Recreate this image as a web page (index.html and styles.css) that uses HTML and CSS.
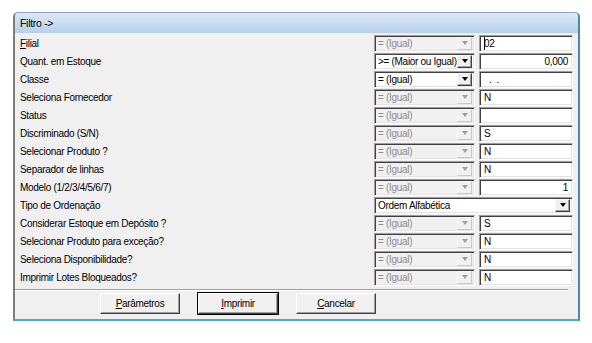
FILE: index.html
```html
<!DOCTYPE html>
<html lang="pt-BR">
<head>
    <meta charset="UTF-8">
    <title>Filtro</title>
    <link rel="stylesheet" href="styles.css">
</head>
<body>
    <div class="window">
        <div class="titlebar">Filtro -&gt;</div>
        <div class="rows">
            <div class="row">
                <span class="label"><u>F</u>ilial</span>
                <div class="combo disabled"><span class="value">= (Igual)</span><span class="drop"></span></div>
                <div class="field"><span class="caret"></span>02</div>
            </div>
            <div class="row">
                <span class="label">Quant. em Estoque</span>
                <div class="combo"><span class="value">&gt;= (Maior ou Igual)</span><span class="drop"></span></div>
                <div class="field right">0,000</div>
            </div>
            <div class="row">
                <span class="label">Classe</span>
                <div class="combo"><span class="value">= (Igual)</span><span class="drop"></span></div>
                <div class="field dots">.&nbsp;&nbsp;.</div>
            </div>
            <div class="row">
                <span class="label">Seleciona Fornecedor</span>
                <div class="combo disabled"><span class="value">= (Igual)</span><span class="drop"></span></div>
                <div class="field">N</div>
            </div>
            <div class="row">
                <span class="label">Status</span>
                <div class="combo disabled"><span class="value">= (Igual)</span><span class="drop"></span></div>
                <div class="field"></div>
            </div>
            <div class="row">
                <span class="label">Discriminado (S/N)</span>
                <div class="combo disabled"><span class="value">= (Igual)</span><span class="drop"></span></div>
                <div class="field">S</div>
            </div>
            <div class="row">
                <span class="label">Selecionar Produto ?</span>
                <div class="combo disabled"><span class="value">= (Igual)</span><span class="drop"></span></div>
                <div class="field">N</div>
            </div>
            <div class="row">
                <span class="label">Separador de linhas</span>
                <div class="combo disabled"><span class="value">= (Igual)</span><span class="drop"></span></div>
                <div class="field">N</div>
            </div>
            <div class="row">
                <span class="label">Modelo (1/2/3/4/5/6/7)</span>
                <div class="combo disabled"><span class="value">= (Igual)</span><span class="drop"></span></div>
                <div class="field right">1</div>
            </div>
            <div class="row">
                <span class="label">Tipo de Ordenação</span>
                <div class="combo wide"><span class="value">Ordem Alfabética</span><span class="drop"></span></div>
            </div>
            <div class="row">
                <span class="label">Considerar Estoque em Depósito ?</span>
                <div class="combo disabled"><span class="value">= (Igual)</span><span class="drop"></span></div>
                <div class="field">S</div>
            </div>
            <div class="row">
                <span class="label">Selecionar Produto para exceção?</span>
                <div class="combo disabled"><span class="value">= (Igual)</span><span class="drop"></span></div>
                <div class="field">N</div>
            </div>
            <div class="row">
                <span class="label">Seleciona Disponibilidade?</span>
                <div class="combo disabled"><span class="value">= (Igual)</span><span class="drop"></span></div>
                <div class="field">N</div>
            </div>
            <div class="row">
                <span class="label">Imprimir Lotes Bloqueados?</span>
                <div class="combo disabled"><span class="value">= (Igual)</span><span class="drop"></span></div>
                <div class="field">N</div>
            </div>
        </div>
        <div class="separator"></div>
        <div class="buttons">
            <button class="btn"><u>P</u>arâmetros</button>
            <button class="btn default"><u>I</u>mprimir</button>
            <button class="btn"><u>C</u>ancelar</button>
        </div>
    </div>
</body>
</html>
```

FILE: styles.css
```css
body {
    margin: 0;
    background: #ffffff;
    font-family: Tahoma, "Liberation Sans", sans-serif;
    font-size: 10px;
    letter-spacing: -0.3px;
    color: #000;
}
.window {
    margin: 12px 0 0 13px;
    width: 563px;
    height: 306px;
    border-left: 2px solid #7d7d7d;
    border-right: 2px solid #4a8aa8;
    border-bottom: 2px solid #3fb0d6;
    border-top: 1px solid #8fa3b8;
    border-radius: 5px 5px 0 0;
    background: #f0f0f0;
    display: flex;
    flex-direction: column;
}
.titlebar {
    height: 20px;
    line-height: 20px;
    padding-left: 5px;
    font-size: 10.5px;
    background: linear-gradient(#dbe8f6, #b9d0ea);
    border-radius: 4px 4px 0 0;
}
.rows {
    padding: 1px 5px 0 5px;
}
.row {
    display: grid;
    grid-template-columns: 350px 101px 94px;
    column-gap: 4px;
    height: 18px;
    align-items: center;
}
.combo {
    height: 17px;
    box-sizing: border-box;
    border-top: 1px solid #a0a0a0;
    border-left: 1px solid #a0a0a0;
    border-right: 1px solid #ffffff;
    border-bottom: 1px solid #ffffff;
    box-shadow: inset 1px 1px #404040, inset -1px -1px #e3e3e3;
    background: #ffffff;
    display: flex;
    align-items: center;
    padding: 0 2px 0 3px;
}
.combo .value {
    flex: 1;
    white-space: nowrap;
    overflow: hidden;
}
.combo.wide {
    grid-column: 2 / 4;
}
.combo.disabled {
    background: #f0f0f0;
    color: #8d8d8d;
}
.drop {
    width: 15px;
    height: 13px;
    box-sizing: border-box;
    background: #f0f0f0;
    border-top: 1px solid #f8f8f8;
    border-left: 1px solid #f8f8f8;
    border-right: 1px solid #404040;
    border-bottom: 1px solid #404040;
    box-shadow: inset -1px -1px #a0a0a0;
    display: flex;
    align-items: center;
    justify-content: center;
}
.drop::after {
    content: "";
    border-left: 3.5px solid transparent;
    border-right: 3.5px solid transparent;
    border-top: 4px solid #000;
}
.disabled .drop {
    border-right-color: #c8c8c8;
    border-bottom-color: #c8c8c8;
    box-shadow: none;
}
.disabled .drop::after {
    border-top-color: #a0a0a0;
}
.field {
    height: 17px;
    box-sizing: border-box;
    border-top: 1px solid #a0a0a0;
    border-left: 1px solid #a0a0a0;
    border-right: 1px solid #ffffff;
    border-bottom: 1px solid #ffffff;
    box-shadow: inset 1px 1px #404040, inset -1px -1px #e3e3e3;
    background: #ffffff;
    padding: 0 4px 0 4px;
    display: flex;
    align-items: center;
}
.field.right {
    justify-content: flex-end;
}
.field.dots {
    padding-left: 9px;
}
.caret {
    width: 1px;
    height: 13px;
    background: #000;
    margin-right: -1px;
}
.separator {
    margin: 3px 10px 0 0;
    border-top: 1px solid #a0a0a0;
    border-bottom: 1px solid #ffffff;
}
.buttons {
    display: flex;
    gap: 18px;
    padding: 2px 0 0 85px;
}
.btn {
    width: 80px;
    height: 21px;
    font: inherit;
    letter-spacing: inherit;
    background: #f0f0f0;
    border-top: 1px solid #ffffff;
    border-left: 1px solid #ffffff;
    border-right: 1px solid #404040;
    border-bottom: 1px solid #404040;
    box-shadow: inset -1px -1px #a0a0a0;
    padding: 0;
    color: #000;
}
.btn.default {
    outline: 1px solid #000;
    outline-offset: 0;
}
```
